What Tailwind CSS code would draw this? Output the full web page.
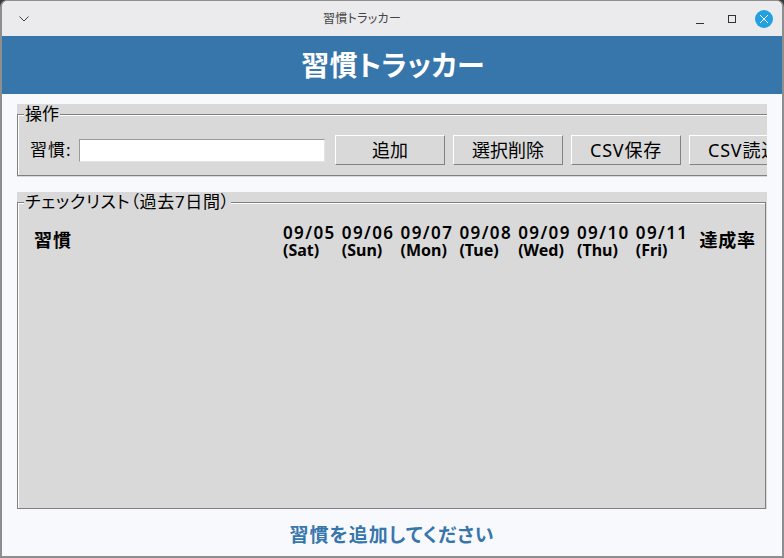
<!DOCTYPE html>
<html lang="ja">
<head>
    <meta charset="UTF-8">
    <title>習慣トラッカー</title>
    <script src="https://cdn.jsdelivr.net/npm/@tailwindcss/browser@4"></script>
</head>
<body class="h-[558px] w-[784px] overflow-hidden bg-[#3a3a3a] font-['Noto_Sans','Noto_Sans_CJK_JP',sans-serif] text-black">
    <div class="flex h-full flex-col overflow-hidden rounded-t-[7px] border-x-2 border-t border-b-2 border-[#8e8e8e] bg-[#f8f9fd]">
        <!-- Title bar -->
        <div class="flex h-[35px] shrink-0 items-center bg-[#ebebed] text-[#444]">
            <svg class="ml-[16px] h-[10px] w-[12px]" viewBox="0 0 12 10" fill="none" stroke="#444" stroke-width="1"><path d="M1.5 2.5 L6 7 L10.5 2.5"/></svg>
            <span class="ml-[293px] text-[12px] leading-none tracking-[0.3px] [font-feature-settings:'palt']">習慣トラッカー</span>
            <svg class="ml-auto h-[10px] w-[10px]" viewBox="0 0 10 10" fill="none" stroke="#333" stroke-width="1"><path d="M1 9.5 H9"/></svg>
            <svg class="ml-[22px] h-[10px] w-[10px]" viewBox="0 0 10 10" fill="none" stroke="#333" stroke-width="1"><rect x="1.5" y="1.5" width="7" height="7"/></svg>
            <div class="mr-[9px] ml-[18px] flex h-[18px] w-[18px] items-center justify-center rounded-full bg-[#22a0e0]">
                <svg class="h-[10px] w-[10px]" viewBox="0 0 10 10" fill="none" stroke="#fff" stroke-width="1"><path d="M1 1 L9 9 M9 1 L1 9"/></svg>
            </div>
        </div>

        <!-- Header -->
        <div class="flex h-[58px] shrink-0 items-center justify-center bg-[#3776ab] pl-[2px] text-[28px] font-bold tracking-[0.3px] text-white [font-feature-settings:'palt']">習慣トラッカー</div>

        <!-- Operations frame -->
        <div class="mx-[15px] mt-[10px] h-[73px] shrink-0 overflow-x-clip bg-[#d9d9d9]">
            <fieldset class="mr-[1px] h-[72px] border border-[#808080] shadow-[inset_1px_1px_0_#fff]">
                <legend class="ml-[6px] bg-[#d9d9d9] px-[1px] pb-[2px] text-[17px] leading-[19px]">操作</legend>
                <div class="mt-[10px] flex items-center pl-[12px] whitespace-nowrap text-[18px]">
                    <span class="w-[49px] shrink-0 text-[17px] tracking-[1px]">習慣:</span>
                    <input type="text" class="h-[23px] w-[246px] shrink-0 border border-[#9a9a9a] border-r-[#e4e4e4] border-b-[#e4e4e4] bg-white">
                    <button class="ml-[10px] h-[30px] w-[110px] shrink-0 border border-[#828282] border-t-white border-l-white">追加</button>
                    <button class="ml-[8px] h-[30px] w-[110px] shrink-0 border border-[#828282] border-t-white border-l-white">選択削除</button>
                    <button class="ml-[8px] h-[30px] w-[110px] shrink-0 border border-[#828282] border-t-white border-l-white tracking-[0.8px]">CSV保存</button>
                    <button class="ml-[8px] h-[30px] w-[110px] shrink-0 border border-[#828282] border-t-white border-l-white tracking-[0.8px]">CSV読込</button>
                </div>
            </fieldset>
        </div>

        <!-- Checklist frame -->
        <div class="mx-[15px] mt-[15px] h-[317px] shrink-0 overflow-x-clip bg-[#d9d9d9]">
            <fieldset class="mr-[1px] h-[317px] border border-[#808080] shadow-[inset_1px_1px_0_#fff]">
                <legend class="ml-[6px] bg-[#d9d9d9] px-[1px] pb-[2px] text-[17px] leading-[19px] tracking-[0.7px] [font-feature-settings:'palt']">チェックリスト（過去7日間）</legend>
                <div class="mt-[11px] grid grid-cols-[265px_repeat(7,58.8px)_auto] items-center text-[16px] font-bold">
                    <div class="pb-[2px] pl-[16px] text-[18px] tracking-[1px]">習慣</div>
                    <div class="leading-[17px]"><span class="text-[17px] tracking-[1.4px] font-semibold">09/05</span><br>(Sat)</div>
                    <div class="leading-[17px]"><span class="text-[17px] tracking-[1.4px] font-semibold">09/06</span><br>(Sun)</div>
                    <div class="leading-[17px]"><span class="text-[17px] tracking-[1.4px] font-semibold">09/07</span><br>(Mon)</div>
                    <div class="leading-[17px]"><span class="text-[17px] tracking-[1.4px] font-semibold">09/08</span><br>(Tue)</div>
                    <div class="leading-[17px]"><span class="text-[17px] tracking-[1.4px] font-semibold">09/09</span><br>(Wed)</div>
                    <div class="leading-[17px]"><span class="text-[17px] tracking-[1.4px] font-semibold">09/10</span><br>(Thu)</div>
                    <div class="leading-[17px]"><span class="text-[17px] tracking-[1.4px] font-semibold">09/11</span><br>(Fri)</div>
                    <div class="ml-[5px] pb-[2px] text-[18px] tracking-[0.7px]">達成率</div>
                </div>
            </fieldset>
        </div>

        <!-- Status -->
        <div class="flex flex-1 items-center justify-center pt-[6px] text-[19px] font-bold tracking-[1px] text-[#3776ab] [font-feature-settings:'palt']">習慣を追加してください</div>
    </div>
</body>
</html>
